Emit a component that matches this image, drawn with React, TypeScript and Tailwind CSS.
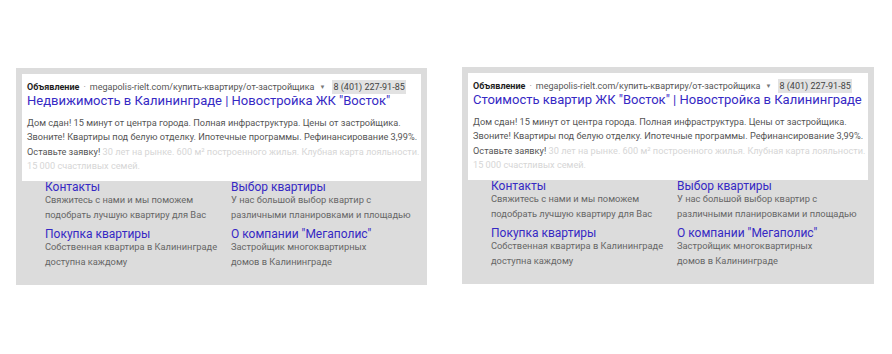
import React from 'react';

type Sitelink = { title: string; text: string[] };

const sitelinks: Sitelink[] = [
  { title: 'Контакты', text: ['Свяжитесь с нами и мы поможем', 'подобрать лучшую квартиру для Вас'] },
  { title: 'Выбор квартиры', text: ['У нас большой выбор квартир с', 'различными планировками и площадью'] },
  { title: 'Покупка квартиры', text: ['Собственная квартира в Калининграде', 'доступна каждому'] },
  { title: 'О компании "Мегаполис"', text: ['Застройщик многоквартирных', 'домов в Калининграде'] },
];

function AdCard({ title, className = '' }: { title: string; className?: string }) {
  return (
    <div className={`w-[411px] bg-[#dcdcdc] p-[6px] pb-[16px] ${className}`}>
      <div className="bg-white pl-[5px] pt-[6px] pb-[8px]">
        <div className="flex items-center text-[9px] leading-[14px] text-[#555] whitespace-nowrap">
          <span className="font-bold text-[#1e1e1e]">Объявление</span>
          <span className="mx-[4px] text-[#888]">·</span>
          <span>megapolis-rielt.com/купить-квартиру/от-застройщика</span>
          <span className="ml-[5px] mr-[7px] text-[6px] text-[#777]">▼</span>
          <span className="bg-[#e2e2e2] px-[1px] text-[#444]">8 (401) 227-91-85</span>
        </div>
        <div className="-mt-[2px] text-[13px] leading-[18px] text-[#3629c4] whitespace-nowrap">{title}</div>
        <div className="mt-[6px] text-[9.2px] leading-[14.3px] text-[#555] whitespace-nowrap">
          <div>Дом сдан! 15 минут от центра города. Полная инфраструктура. Цены от застройщика.</div>
          <div>Звоните! Квартиры под белую отделку. Ипотечные программы. Рефинансирование 3,99%.</div>
          <div>
            Оставьте заявку!{' '}
            <span className="text-[#d6d6d6]">
              30 лет на рынке. 600 м² построенного жилья. Клубная карта лояльности.
            </span>
          </div>
          <div className="text-[#d6d6d6]">15 000 счастливых семей.</div>
        </div>
      </div>
      <div className="grid grid-cols-[186px_1fr] gap-y-[6px] pl-[23px]">
        {sitelinks.map((s) => (
          <div key={s.title}>
            <div className="text-[12px] leading-[12px] text-[#3629c4] whitespace-nowrap">{s.title}</div>
            {s.text.map((t) => (
              <div key={t} className="text-[9.3px] leading-[14.5px] text-[#666] whitespace-nowrap">
                {t}
              </div>
            ))}
          </div>
        ))}
      </div>
    </div>
  );
}

export default function App() {
  return (
    <div className="w-[892px] h-[354px] bg-white font-['Roboto',sans-serif] flex items-start pl-[16px] pt-[68px] gap-[35px]">
      <AdCard title={'Недвижимость в Калининграде | Новостройка ЖК "Восток"'} />
      <AdCard title={'Стоимость квартир ЖК "Восток" | Новостройка в Калининграде'} className="-mt-px w-[412px]" />
    </div>
  );
}
